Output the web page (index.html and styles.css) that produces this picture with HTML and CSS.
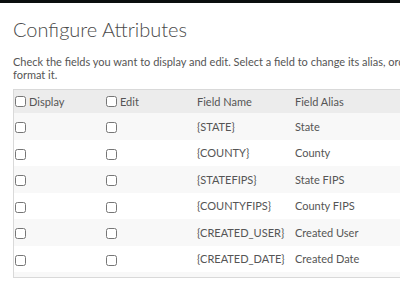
FILE: index.html
```html
<!DOCTYPE html>
<html lang="en">

<head>
    <meta charset="UTF-8">
    <title>Configure Attributes</title>
    <link rel="stylesheet" href="styles.css">
</head>

<body>
    <div class="map-strip"></div>
    <div class="panel">
        <h1>Configure Attributes</h1>
        <p class="hint">Check the fields you want to display and edit. Select a field to change its alias, order, or format it.</p>
        <div class="table-wrap">
            <table class="fields">
                <thead>
                    <tr>
                        <th class="col-check"><label><input type="checkbox"> Display</label></th>
                        <th class="col-check"><label><input type="checkbox"> Edit</label></th>
                        <th class="col-name">Field Name</th>
                        <th class="col-alias">Field Alias</th>
                    </tr>
                </thead>
                <tbody>
                    <tr>
                        <td><input type="checkbox"></td>
                        <td><input type="checkbox"></td>
                        <td>{STATE}</td>
                        <td>State</td>
                    </tr>
                    <tr>
                        <td><input type="checkbox"></td>
                        <td><input type="checkbox"></td>
                        <td>{COUNTY}</td>
                        <td>County</td>
                    </tr>
                    <tr>
                        <td><input type="checkbox"></td>
                        <td><input type="checkbox"></td>
                        <td>{STATEFIPS}</td>
                        <td>State FIPS</td>
                    </tr>
                    <tr>
                        <td><input type="checkbox"></td>
                        <td><input type="checkbox"></td>
                        <td>{COUNTYFIPS}</td>
                        <td>County FIPS</td>
                    </tr>
                    <tr>
                        <td><input type="checkbox"></td>
                        <td><input type="checkbox"></td>
                        <td>{CREATED_USER}</td>
                        <td>Created User</td>
                    </tr>
                    <tr>
                        <td><input type="checkbox"></td>
                        <td><input type="checkbox"></td>
                        <td>{CREATED_DATE}</td>
                        <td>Created Date</td>
                    </tr>
                </tbody>
            </table>
        </div>
    </div>
</body>

</html>
```

FILE: styles.css
```css
* {
    box-sizing: border-box;
}

html,
body {
    overflow: hidden;
}

body {
    font-family: Lato, "Open Sans", sans-serif;
    color: #4c4c4c;
    margin: 0;
    padding: 0;
    background: #fff;
}

.map-strip {
    height: 3px;
    background: #0b0f0f;
}

.panel {
    width: 448px;
    padding: 0 0 0 13px;
}

h1 {
    font-weight: 300;
    font-size: 20px;
    line-height: 24px;
    margin: 14px 0 0 0;
    color: #4a4a4a;
}

.hint {
    font-size: 11px;
    line-height: 12.5px;
    margin: 15px 0 0 0;
    color: #555;
}

.table-wrap {
    margin-top: 8px;
    height: 189px;
    overflow: hidden;
    border: 1px solid #d9d9d9;
    border-right: none;
    background: #f8f8f8;
}

.fields {
    width: 100%;
    table-layout: fixed;
    border-collapse: collapse;
    font-size: 11px;
    color: #555;
}

.fields th {
    background: #ececec;
    font-weight: 400;
    text-align: left;
    height: 23px;
    padding: 0 0 0 1px;
}

.fields td {
    height: 26.5px;
    padding: 0 0 0 1px;
    white-space: nowrap;
}

.fields tbody tr {
    background: #fff;
}

.fields tbody tr:nth-child(odd) {
    background: #f8f8f8;
}

.col-check {
    width: 91px;
}

.col-name {
    width: 98px;
}

.fields input[type="checkbox"] {
    width: 11px;
    height: 11px;
    margin: 0 2px 0 0;
    vertical-align: middle;
}

.fields label {
    display: inline-flex;
    align-items: center;
    gap: 1px;
}
```
